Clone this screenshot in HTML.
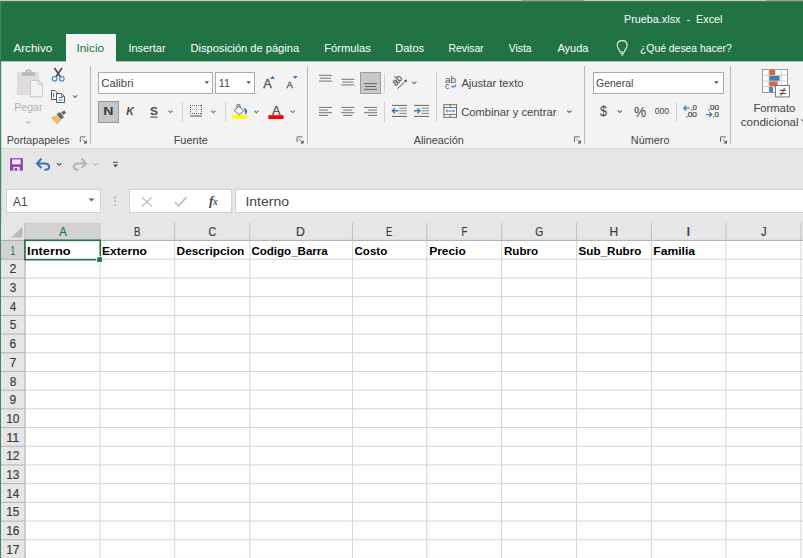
<!DOCTYPE html>
<html lang="es"><head><meta charset="utf-8"><title>Prueba.xlsx - Excel</title>
<style>
html,body{margin:0;padding:0;background:#fff;overflow:hidden}
svg{display:block;font-family:"Liberation Sans",sans-serif}
</style></head><body>
<svg width="803" height="558" viewBox="0 0 803 558">
<rect x="0" y="0" width="803" height="558" fill="#ffffff" />
<rect x="0" y="0" width="803" height="61.6" fill="#217346" />
<rect x="0" y="0" width="803" height="1.15" fill="#c9c6c9" />
<rect x="522" y="0" width="62" height="1.15" fill="#9c999d" />
<rect x="766" y="0" width="37" height="1.15" fill="#9c999d" />
<rect x="1" y="61.6" width="802" height="86.4" fill="#f3f3f3" />
<rect x="1" y="148" width="802" height="1" fill="#dadada" />
<rect x="1" y="149" width="802" height="91" fill="#e6e6e6" />
<rect x="66" y="34" width="50" height="28" fill="#f3f3f3" />
<rect x="0" y="1" width="1.2" height="557" fill="#3f8661" />
<text x="624.01" y="22.9" font-size="11.5" fill="#ffffff" textLength="98.51" lengthAdjust="spacingAndGlyphs" xml:space="preserve">Prueba.xlsx  -  Excel</text>
<text x="13.48" y="51.6" font-size="11.5" fill="#fff" textLength="38.71" lengthAdjust="spacingAndGlyphs" >Archivo</text>
<text x="76.51" y="51.6" font-size="11.5" fill="#217346" textLength="27.59" lengthAdjust="spacingAndGlyphs" >Inicio</text>
<text x="128.39" y="51.6" font-size="11.5" fill="#fff" textLength="37.19" lengthAdjust="spacingAndGlyphs" >Insertar</text>
<text x="190.49" y="51.6" font-size="11.5" fill="#fff" textLength="108.61" lengthAdjust="spacingAndGlyphs" >Disposición de página</text>
<text x="324.18" y="51.6" font-size="11.5" fill="#fff" textLength="46.62" lengthAdjust="spacingAndGlyphs" >Fórmulas</text>
<text x="395.19" y="51.6" font-size="11.5" fill="#fff" textLength="28.91" lengthAdjust="spacingAndGlyphs" >Datos</text>
<text x="448.55" y="51.6" font-size="11.5" fill="#fff" textLength="35.02" lengthAdjust="spacingAndGlyphs" >Revisar</text>
<text x="508.86" y="51.6" font-size="11.5" fill="#fff" textLength="22.64" lengthAdjust="spacingAndGlyphs" >Vista</text>
<text x="557.38" y="51.6" font-size="11.5" fill="#fff" textLength="31.12" lengthAdjust="spacingAndGlyphs" >Ayuda</text>
<text x="640.04" y="51.6" font-size="11.5" fill="#fff" textLength="91.65" lengthAdjust="spacingAndGlyphs" >¿Qué desea hacer?</text>
<rect x="90" y="66" width="1" height="78" fill="#b6b6b6" />
<rect x="307" y="66" width="1" height="78" fill="#b6b6b6" />
<rect x="584" y="66" width="1" height="78" fill="#b6b6b6" />
<rect x="730" y="66" width="1" height="78" fill="#b6b6b6" />
<rect x="182" y="102" width="1" height="20" fill="#d2d2d2" />
<rect x="225" y="102" width="1" height="20" fill="#d2d2d2" />
<rect x="384" y="73" width="1" height="20" fill="#d2d2d2" />
<rect x="384" y="102" width="1" height="20" fill="#d2d2d2" />
<rect x="436" y="72" width="1" height="50" fill="#d2d2d2" />
<rect x="676" y="102" width="1" height="20" fill="#d2d2d2" />
<text x="6.72" y="143.8" font-size="10" fill="#444444" textLength="62.96" lengthAdjust="spacingAndGlyphs" >Portapapeles</text>
<text x="173.7" y="143.8" font-size="10" fill="#444444" textLength="34.08" lengthAdjust="spacingAndGlyphs" >Fuente</text>
<text x="413.68" y="143.8" font-size="10" fill="#444444" textLength="50.03" lengthAdjust="spacingAndGlyphs" >Alineación</text>
<text x="630.81" y="143.8" font-size="10" fill="#444444" textLength="38.65" lengthAdjust="spacingAndGlyphs" >Número</text>
<rect x="98" y="72" width="115" height="22" fill="#ababab" />
<rect x="99" y="73" width="113" height="20" fill="#ffffff" />
<rect x="215" y="72" width="40" height="22" fill="#ababab" />
<rect x="216" y="73" width="38" height="20" fill="#ffffff" />
<rect x="593" y="72" width="131" height="22" fill="#ababab" />
<rect x="594" y="73" width="129" height="20" fill="#ffffff" />
<text x="101.22" y="86.9" font-size="11.4" fill="#444444" textLength="32.24" lengthAdjust="spacingAndGlyphs" >Calibri</text>
<text x="218.85" y="86.9" font-size="11.4" fill="#444444" textLength="10.93" lengthAdjust="spacingAndGlyphs" >11</text>
<text x="595.97" y="86.9" font-size="11.4" fill="#444444" textLength="37.33" lengthAdjust="spacingAndGlyphs" >General</text>
<path d="M204.5 81.3 L209.10000000000002 81.3 L206.8 84.1 Z" fill="#555"/>
<path d="M246.29999999999998 81.3 L250.9 81.3 L248.6 84.1 Z" fill="#555"/>
<path d="M714.1 81.3 L718.6999999999999 81.3 L716.4 84.1 Z" fill="#555"/>
<rect x="98" y="101" width="21" height="22" fill="#9a9a9a" />
<rect x="99" y="102" width="19" height="20" fill="#c6c6c6" />
<text x="103.26" y="115.1" font-size="10.8" fill="#3c3c3c" font-weight="bold" textLength="10.2" lengthAdjust="spacingAndGlyphs" >N</text>
<text x="126.21" y="115.1" font-size="10.8" fill="#4a4a4a" font-weight="bold" font-style="italic" textLength="7.65" lengthAdjust="spacingAndGlyphs" >K</text>
<text x="149.96" y="115.1" font-size="10.8" fill="#4a4a4a" font-weight="bold" textLength="7.9" lengthAdjust="spacingAndGlyphs" >S</text>
<rect x="150" y="116.6" width="7.6" height="1" fill="#444" />
<path d="M168.4 110.6 L170.5 112.6 L172.6 110.6" fill="none" stroke="#707070" stroke-width="1.1"/>
<path d="M211.3 110.7 L213.4 112.7 L215.5 110.7" fill="none" stroke="#707070" stroke-width="1.1"/>
<path d="M254.29999999999998 110.7 L256.4 112.7 L258.5 110.7" fill="none" stroke="#707070" stroke-width="1.1"/>
<path d="M290.59999999999997 110.6 L292.7 112.6 L294.8 110.6" fill="none" stroke="#707070" stroke-width="1.1"/>
<path d="M412.2 81.7 L414.3 83.7 L416.40000000000003 81.7" fill="none" stroke="#707070" stroke-width="1.1"/>
<path d="M567.1999999999999 110.5 L569.3 112.5 L571.4 110.5" fill="none" stroke="#707070" stroke-width="1.1"/>
<path d="M617.6999999999999 110.5 L619.8 112.5 L621.9 110.5" fill="none" stroke="#707070" stroke-width="1.1"/>
<path d="M73.0 95.4 L75.1 97.4 L77.19999999999999 95.4" fill="none" stroke="#707070" stroke-width="1.1"/>
<path d="M26.2 121.3 L28.3 123.3 L30.400000000000002 121.3" fill="none" stroke="#b4b4b4" stroke-width="1.1"/>
<rect x="360" y="72" width="21" height="22" fill="#9c9c9c" />
<rect x="361" y="73" width="19" height="20" fill="#c8c8c8" />
<text x="461.38" y="87.1" font-size="11.4" fill="#444444" textLength="62.09" lengthAdjust="spacingAndGlyphs" >Ajustar texto</text>
<text x="461.13" y="115.7" font-size="11.4" fill="#444444" textLength="95.25" lengthAdjust="spacingAndGlyphs" >Combinar y centrar</text>
<text x="14.23" y="111.3" font-size="11.4" fill="#b1b1b1" textLength="28.24" lengthAdjust="spacingAndGlyphs" >Pegar</text>
<text x="753.38" y="112.1" font-size="11.4" fill="#444444" textLength="41.9" lengthAdjust="spacingAndGlyphs" >Formato</text>
<text x="740.81" y="125.8" font-size="11.4" fill="#444444" textLength="57.76" lengthAdjust="spacingAndGlyphs" >condicional</text>
<path d="M801.1999999999999 119.3 L803.3 121.3 L805.4 119.3" fill="none" stroke="#707070" stroke-width="1.1"/>
<text x="600.06" y="116.4" font-size="15.2" fill="#444444" textLength="7.04" lengthAdjust="spacingAndGlyphs" >$</text>
<text x="634.01" y="116.6" font-size="13.8" fill="#444444" textLength="12.18" lengthAdjust="spacingAndGlyphs" >%</text>
<text x="654.76" y="114.1" font-size="8.6" fill="#444444" textLength="14.37" lengthAdjust="spacingAndGlyphs" >000</text>
<rect x="6" y="189" width="95" height="24" fill="#d2d2d2" />
<rect x="7" y="190" width="93" height="22" fill="#ffffff" />
<rect x="129" y="189" width="103" height="24" fill="#d2d2d2" />
<rect x="130" y="190" width="101" height="22" fill="#ffffff" />
<rect x="235" y="189" width="568" height="24" fill="#d2d2d2" />
<rect x="236" y="190" width="567" height="22" fill="#ffffff" />
<text x="13.08" y="206.2" font-size="12.2" fill="#444444" textLength="14.4" lengthAdjust="spacingAndGlyphs" >A1</text>
<path d="M88.5 198.4 L94.5 198.4 L91.5 201.4 Z" fill="#666"/>
<rect x="114.5" y="196.8" width="1.3" height="1.3" fill="#8e8e8e" />
<rect x="114.5" y="200.7" width="1.3" height="1.3" fill="#8e8e8e" />
<rect x="114.5" y="204.6" width="1.3" height="1.3" fill="#8e8e8e" />
<text x="245.41" y="206.2" font-size="12.2" fill="#444444" textLength="43.58" lengthAdjust="spacingAndGlyphs" >Interno</text>
<path d="M142 197.4 L151.8 206.2 M151.8 197.4 L142 206.2" stroke="#b8b8b8" stroke-width="1.2" fill="none"/>
<path d="M175 202.2 L178.6 205.8 L186.6 197.2" stroke="#c0c0c0" stroke-width="1.8" fill="none"/>
<text x="209" y="205.2" fill="#4a4a4a" font-style="italic" font-weight="bold" font-family="Liberation Serif, serif"><tspan font-size="13.5">f</tspan><tspan font-size="9.5" dx="-0.6">x</tspan></text>
<rect x="1" y="222.8" width="802" height="17.2" fill="#e6e6e6" />
<rect x="1" y="240" width="23.2" height="318" fill="#e6e6e6" />
<rect x="24.6" y="222.8" width="75" height="17.2" fill="#d2d2d2" />
<rect x="1" y="240.8" width="23.2" height="18.2" fill="#d2d2d2" />
<rect x="99.6" y="222.8" width="1" height="17.2" fill="#c0c0c0" />
<rect x="174.1" y="222.8" width="1" height="17.2" fill="#c0c0c0" />
<rect x="249.3" y="222.8" width="1" height="17.2" fill="#c0c0c0" />
<rect x="351.9" y="222.8" width="1" height="17.2" fill="#c0c0c0" />
<rect x="426.3" y="222.8" width="1" height="17.2" fill="#c0c0c0" />
<rect x="501.2" y="222.8" width="1" height="17.2" fill="#c0c0c0" />
<rect x="576.1" y="222.8" width="1" height="17.2" fill="#c0c0c0" />
<rect x="650.9" y="222.8" width="1" height="17.2" fill="#c0c0c0" />
<rect x="725.4" y="222.8" width="1" height="17.2" fill="#c0c0c0" />
<rect x="800.5" y="222.8" width="1" height="17.2" fill="#c0c0c0" />
<rect x="24.1" y="222.8" width="1.2" height="17.2" fill="#c4c4c4" />
<rect x="1" y="239.9" width="802" height="1" fill="#ababab" />
<rect x="24.1" y="240" width="1.7" height="318" fill="#c2c2c2" />
<rect x="99.6" y="240.9" width="1" height="317.1" fill="#d4d4d4" />
<rect x="174.1" y="240.9" width="1" height="317.1" fill="#d4d4d4" />
<rect x="249.3" y="240.9" width="1" height="317.1" fill="#d4d4d4" />
<rect x="351.9" y="240.9" width="1" height="317.1" fill="#d4d4d4" />
<rect x="426.3" y="240.9" width="1" height="317.1" fill="#d4d4d4" />
<rect x="501.2" y="240.9" width="1" height="317.1" fill="#d4d4d4" />
<rect x="576.1" y="240.9" width="1" height="317.1" fill="#d4d4d4" />
<rect x="650.9" y="240.9" width="1" height="317.1" fill="#d4d4d4" />
<rect x="725.4" y="240.9" width="1" height="317.1" fill="#d4d4d4" />
<rect x="800.5" y="240.9" width="1" height="317.1" fill="#d4d4d4" />
<rect x="25.8" y="258.75" width="777.2" height="1" fill="#d4d4d4" />
<rect x="1" y="258.75" width="24" height="1" fill="#b4b4b4" />
<rect x="25.8" y="277.45" width="777.2" height="1" fill="#d4d4d4" />
<rect x="1" y="277.45" width="24" height="1" fill="#b4b4b4" />
<rect x="25.8" y="296.15" width="777.2" height="1" fill="#d4d4d4" />
<rect x="1" y="296.15" width="24" height="1" fill="#b4b4b4" />
<rect x="25.8" y="314.85" width="777.2" height="1" fill="#d4d4d4" />
<rect x="1" y="314.85" width="24" height="1" fill="#b4b4b4" />
<rect x="25.8" y="333.55" width="777.2" height="1" fill="#d4d4d4" />
<rect x="1" y="333.55" width="24" height="1" fill="#b4b4b4" />
<rect x="25.8" y="352.25" width="777.2" height="1" fill="#d4d4d4" />
<rect x="1" y="352.25" width="24" height="1" fill="#b4b4b4" />
<rect x="25.8" y="370.95" width="777.2" height="1" fill="#d4d4d4" />
<rect x="1" y="370.95" width="24" height="1" fill="#b4b4b4" />
<rect x="25.8" y="389.65" width="777.2" height="1" fill="#d4d4d4" />
<rect x="1" y="389.65" width="24" height="1" fill="#b4b4b4" />
<rect x="25.8" y="408.35" width="777.2" height="1" fill="#d4d4d4" />
<rect x="1" y="408.35" width="24" height="1" fill="#b4b4b4" />
<rect x="25.8" y="427.05" width="777.2" height="1" fill="#d4d4d4" />
<rect x="1" y="427.05" width="24" height="1" fill="#b4b4b4" />
<rect x="25.8" y="445.75" width="777.2" height="1" fill="#d4d4d4" />
<rect x="1" y="445.75" width="24" height="1" fill="#b4b4b4" />
<rect x="25.8" y="464.45" width="777.2" height="1" fill="#d4d4d4" />
<rect x="1" y="464.45" width="24" height="1" fill="#b4b4b4" />
<rect x="25.8" y="483.15" width="777.2" height="1" fill="#d4d4d4" />
<rect x="1" y="483.15" width="24" height="1" fill="#b4b4b4" />
<rect x="25.8" y="501.85" width="777.2" height="1" fill="#d4d4d4" />
<rect x="1" y="501.85" width="24" height="1" fill="#b4b4b4" />
<rect x="25.8" y="520.55" width="777.2" height="1" fill="#d4d4d4" />
<rect x="1" y="520.55" width="24" height="1" fill="#b4b4b4" />
<rect x="25.8" y="539.25" width="777.2" height="1" fill="#d4d4d4" />
<rect x="1" y="539.25" width="24" height="1" fill="#b4b4b4" />
<rect x="25.8" y="557.95" width="777.2" height="1" fill="#d4d4d4" />
<rect x="1" y="557.95" width="24" height="1" fill="#b4b4b4" />
<path d="M22.3 226.8 L22.3 237.5 L11.3 237.5 Z" fill="#b9b9b9"/>
<text x="59.33" y="235.6" font-size="12.1" fill="#217346" textLength="7.59" lengthAdjust="spacingAndGlyphs" stroke="#217346" stroke-width="0.2">A</text>
<text x="133.96" y="235.6" font-size="12.1" fill="#3d3d3d" textLength="6.45" lengthAdjust="spacingAndGlyphs" stroke="#3d3d3d" stroke-width="0.2">B</text>
<text x="208.61" y="235.6" font-size="12.1" fill="#3d3d3d" textLength="7.7" lengthAdjust="spacingAndGlyphs" stroke="#3d3d3d" stroke-width="0.2">C</text>
<text x="296.05" y="235.6" font-size="12.1" fill="#3d3d3d" textLength="8.84" lengthAdjust="spacingAndGlyphs" stroke="#3d3d3d" stroke-width="0.2">D</text>
<text x="385.97" y="235.6" font-size="12.1" fill="#3d3d3d" textLength="6.34" lengthAdjust="spacingAndGlyphs" stroke="#3d3d3d" stroke-width="0.2">E</text>
<text x="461.47" y="235.6" font-size="12.1" fill="#3d3d3d" textLength="5.81" lengthAdjust="spacingAndGlyphs" stroke="#3d3d3d" stroke-width="0.2">F</text>
<text x="535.13" y="235.6" font-size="12.1" fill="#3d3d3d" textLength="8.04" lengthAdjust="spacingAndGlyphs" stroke="#3d3d3d" stroke-width="0.2">G</text>
<text x="609.47" y="235.6" font-size="12.1" fill="#3d3d3d" textLength="8.6" lengthAdjust="spacingAndGlyphs" stroke="#3d3d3d" stroke-width="0.2">H</text>
<text x="686.31" y="235.6" font-size="12.1" fill="#3d3d3d" textLength="4.17" lengthAdjust="spacingAndGlyphs" stroke="#3d3d3d" stroke-width="0.2">I</text>
<text x="760.98" y="235.6" font-size="12.1" fill="#3d3d3d" textLength="5.55" lengthAdjust="spacingAndGlyphs" stroke="#3d3d3d" stroke-width="0.2">J</text>
<text x="10.83" y="254.65" font-size="11.9" fill="#217346" textLength="4.13" lengthAdjust="spacingAndGlyphs" stroke="#217346" stroke-width="0.2">1</text>
<text x="9.58" y="273.34999999999997" font-size="11.9" fill="#3d3d3d" textLength="6.84" lengthAdjust="spacingAndGlyphs" stroke="#3d3d3d" stroke-width="0.2">2</text>
<text x="9.75" y="292.04999999999995" font-size="11.9" fill="#3d3d3d" textLength="6.57" lengthAdjust="spacingAndGlyphs" stroke="#3d3d3d" stroke-width="0.2">3</text>
<text x="9.94" y="310.75" font-size="11.9" fill="#3d3d3d" textLength="6.18" lengthAdjust="spacingAndGlyphs" stroke="#3d3d3d" stroke-width="0.2">4</text>
<text x="9.73" y="329.45" font-size="11.9" fill="#3d3d3d" textLength="6.57" lengthAdjust="spacingAndGlyphs" stroke="#3d3d3d" stroke-width="0.2">5</text>
<text x="9.58" y="348.15" font-size="11.9" fill="#3d3d3d" textLength="6.75" lengthAdjust="spacingAndGlyphs" stroke="#3d3d3d" stroke-width="0.2">6</text>
<text x="9.57" y="366.84999999999997" font-size="11.9" fill="#3d3d3d" textLength="6.85" lengthAdjust="spacingAndGlyphs" stroke="#3d3d3d" stroke-width="0.2">7</text>
<text x="9.68" y="385.54999999999995" font-size="11.9" fill="#3d3d3d" textLength="6.64" lengthAdjust="spacingAndGlyphs" stroke="#3d3d3d" stroke-width="0.2">8</text>
<text x="9.63" y="404.25" font-size="11.9" fill="#3d3d3d" textLength="6.74" lengthAdjust="spacingAndGlyphs" stroke="#3d3d3d" stroke-width="0.2">9</text>
<text x="6.2" y="422.95" font-size="11.9" fill="#3d3d3d" textLength="13.16" lengthAdjust="spacingAndGlyphs" stroke="#3d3d3d" stroke-width="0.2">10</text>
<text x="6.19" y="441.65" font-size="11.9" fill="#3d3d3d" textLength="13.29" lengthAdjust="spacingAndGlyphs" stroke="#3d3d3d" stroke-width="0.2">11</text>
<text x="6.19" y="460.34999999999997" font-size="11.9" fill="#3d3d3d" textLength="13.31" lengthAdjust="spacingAndGlyphs" stroke="#3d3d3d" stroke-width="0.2">12</text>
<text x="6.19" y="479.04999999999995" font-size="11.9" fill="#3d3d3d" textLength="13.23" lengthAdjust="spacingAndGlyphs" stroke="#3d3d3d" stroke-width="0.2">13</text>
<text x="6.21" y="497.75" font-size="11.9" fill="#3d3d3d" textLength="13.04" lengthAdjust="spacingAndGlyphs" stroke="#3d3d3d" stroke-width="0.2">14</text>
<text x="6.2" y="516.4499999999999" font-size="11.9" fill="#3d3d3d" textLength="13.2" lengthAdjust="spacingAndGlyphs" stroke="#3d3d3d" stroke-width="0.2">15</text>
<text x="6.19" y="535.15" font-size="11.9" fill="#3d3d3d" textLength="13.23" lengthAdjust="spacingAndGlyphs" stroke="#3d3d3d" stroke-width="0.2">16</text>
<text x="6.19" y="553.85" font-size="11.9" fill="#3d3d3d" textLength="13.31" lengthAdjust="spacingAndGlyphs" stroke="#3d3d3d" stroke-width="0.2">17</text>
<text x="27.14" y="255" font-size="11.7" fill="#000" font-weight="bold" textLength="43.56" lengthAdjust="spacingAndGlyphs" >Interno</text>
<text x="102.09" y="255" font-size="11.7" fill="#000" font-weight="bold" textLength="44.88" lengthAdjust="spacingAndGlyphs" >Externo</text>
<text x="176.61" y="255" font-size="11.7" fill="#000" font-weight="bold" textLength="67.73" lengthAdjust="spacingAndGlyphs" >Descripcion</text>
<text x="251.43" y="255" font-size="11.7" fill="#000" font-weight="bold" textLength="76.3" lengthAdjust="spacingAndGlyphs" >Codigo_Barra</text>
<text x="354.53" y="255" font-size="11.7" fill="#000" font-weight="bold" textLength="32.73" lengthAdjust="spacingAndGlyphs" >Costo</text>
<text x="429.2" y="255" font-size="11.7" fill="#000" font-weight="bold" textLength="36.57" lengthAdjust="spacingAndGlyphs" >Precio</text>
<text x="503.92" y="255" font-size="11.7" fill="#000" font-weight="bold" textLength="34.23" lengthAdjust="spacingAndGlyphs" >Rubro</text>
<text x="578.56" y="255" font-size="11.7" fill="#000" font-weight="bold" textLength="62.79" lengthAdjust="spacingAndGlyphs" >Sub_Rubro</text>
<text x="653.29" y="255" font-size="11.7" fill="#000" font-weight="bold" textLength="41.84" lengthAdjust="spacingAndGlyphs" >Familia</text>
<rect x="24.9" y="240.3" width="75.4" height="19.4" fill="none" stroke="#217346" stroke-width="1.6"/>
<rect x="96.4" y="256.4" width="6.2" height="6.2" fill="#ffffff" />
<rect x="97.2" y="257.2" width="4.7" height="4.7" fill="#217346" />
<rect x="17" y="72" width="22" height="23" rx="1" fill="#dfdbdf"/>
<path d="M22.1 75.8 L22.1 72.2 L25.6 72.2 L25.6 71 Q25.6 69.3 28.5 69.3 Q31.4 69.3 31.4 71 L31.4 72.2 L34.9 72.2 L34.9 75.8 Z" fill="#b9b5b9"/>
<circle cx="28.5" cy="71.6" r="0.9" fill="#f3f3f3"/>
<path d="M30.5 80.5 L38.8 80.5 L42.6 84.3 L42.6 96.8 L30.5 96.8 Z" fill="#f5f2f5" stroke="#c9c5c9" stroke-width="1"/>
<path d="M38.6 80.7 L38.6 84.5 L42.4 84.5" fill="none" stroke="#c9c5c9" stroke-width="1"/>
<path d="M54.4 68 L60.6 77 M62 68 L55.8 77" stroke="#4a4a4a" stroke-width="1.6" fill="none"/>
<circle cx="54.6" cy="78.8" r="2.3" fill="none" stroke="#4a88c7" stroke-width="1.15"/>
<circle cx="61.8" cy="78.8" r="2.3" fill="none" stroke="#4a88c7" stroke-width="1.15"/>
<path d="M51.5 90.5 L55 90.5 L57 92.5 L57 99.5 L51.5 99.5 Z" fill="#fff" stroke="#5a5a5a" stroke-width="1"/>
<path d="M56.5 93.5 L61.5 93.5 L64.5 96.5 L64.5 102.5 L56.5 102.5 Z" fill="#fff" stroke="#5a5a5a" stroke-width="1"/>
<path d="M61.5 93.5 L61.5 96.5 L64.5 96.5" fill="none" stroke="#5a5a5a" stroke-width="0.8"/>
<path d="M53.5 93 L53.5 97.5 M58.5 97.5 L62.8 97.5 M58.5 100 L62.8 100" stroke="#3f7fc1" stroke-width="1" fill="none"/>
<path d="M50.7 117.4 L56.6 115 L61.2 120.4 L57.2 124.4 Z" fill="#ebbd70"/>
<path d="M56.6 114.2 L60.2 111.9 L64 117.2 L60.9 119.5 Z" fill="#6a6a6a"/>
<path d="M61.4 112.2 L64.3 110.6 L66 112.9 L63.3 114.8 Z" fill="#5a5a5a"/>
<rect x="190" y="105" width="1" height="1" fill="#6a6a6a"/>
<rect x="190" y="113" width="1" height="1" fill="#555"/>
<rect x="192" y="105" width="1" height="1" fill="#6a6a6a"/>
<rect x="192" y="113" width="1" height="1" fill="#555"/>
<rect x="194" y="105" width="1" height="1" fill="#6a6a6a"/>
<rect x="194" y="113" width="1" height="1" fill="#555"/>
<rect x="196" y="105" width="1" height="1" fill="#6a6a6a"/>
<rect x="196" y="113" width="1" height="1" fill="#555"/>
<rect x="198" y="105" width="1" height="1" fill="#6a6a6a"/>
<rect x="198" y="113" width="1" height="1" fill="#555"/>
<rect x="200" y="105" width="1" height="1" fill="#6a6a6a"/>
<rect x="200" y="113" width="1" height="1" fill="#555"/>
<rect x="201" y="105" width="1" height="1" fill="#555"/><rect x="201" y="113" width="1" height="1" fill="#555"/>
<rect x="190" y="105" width="1" height="1" fill="#555"/>
<rect x="201" y="105" width="1" height="1" fill="#555"/>
<rect x="190" y="107" width="1" height="1" fill="#555"/>
<rect x="201" y="107" width="1" height="1" fill="#555"/>
<rect x="190" y="109" width="1" height="1" fill="#555"/>
<rect x="201" y="109" width="1" height="1" fill="#555"/>
<rect x="190" y="111" width="1" height="1" fill="#555"/>
<rect x="201" y="111" width="1" height="1" fill="#555"/>
<rect x="190" y="113" width="1" height="1" fill="#555"/>
<rect x="201" y="113" width="1" height="1" fill="#555"/>
<rect x="192" y="109" width="1" height="1" fill="#b0b0b0"/>
<rect x="194" y="109" width="1" height="1" fill="#b0b0b0"/>
<rect x="196" y="109" width="1" height="1" fill="#b0b0b0"/>
<rect x="198" y="109" width="1" height="1" fill="#b0b0b0"/>
<rect x="200" y="109" width="1" height="1" fill="#b0b0b0"/>
<rect x="196" y="107" width="1" height="1" fill="#b0b0b0"/>
<rect x="196" y="109" width="1" height="1" fill="#b0b0b0"/>
<rect x="196" y="111" width="1" height="1" fill="#b0b0b0"/>
<rect x="190" y="115.5" width="12" height="1" fill="#555"/>
<path d="M239 105.9 L243.8 110.6 L239.2 114.9 L234.5 110.3 Z" fill="#fff" stroke="#666" stroke-width="1"/>
<path d="M237 108.6 L237 104.7 L240 104.7 L240 108.4" fill="none" stroke="#666" stroke-width="0.9"/>
<path d="M244.2 107.6 Q247.6 109.6 247.2 112 Q246.8 114 245.2 114.8 Q245.6 112.6 244.6 111.6 Z" fill="#3f7fc1"/>
<rect x="232" y="115.1" width="15" height="3.8" fill="#ffff00"/>
<text x="276.2" y="115.1" font-size="12.8" fill="#555" stroke="#555" stroke-width="0.3" text-anchor="middle">A</text>
<rect x="268.3" y="115.2" width="15.2" height="3.8" fill="#ff0000"/>
<text x="267.4" y="87.9" font-size="12.8" fill="#555" stroke="#555" stroke-width="0.3" text-anchor="middle">A</text>
<path d="M270 78.9 L275 78.9 L272.5 75.8 Z" fill="#3f7fc1"/>
<text x="289.8" y="87.9" font-size="9.6" fill="#555" stroke="#555" stroke-width="0.3" text-anchor="middle">A</text>
<path d="M292.7 76 L297.7 76 L295.2 79 Z" fill="#3f7fc1"/>
<rect x="319" y="74.8" width="13" height="1" fill="#777"/>
<rect x="320" y="77.7" width="11" height="1" fill="#777"/>
<rect x="319" y="80.6" width="13" height="1" fill="#777"/>
<rect x="341.2" y="78.8" width="13.100000000000023" height="1" fill="#777"/>
<rect x="342.2" y="81.6" width="11.100000000000023" height="1" fill="#777"/>
<rect x="341.2" y="84.4" width="13.100000000000023" height="1" fill="#777"/>
<rect x="364" y="83.1" width="13" height="1" fill="#666"/>
<rect x="365" y="86.0" width="11" height="1" fill="#666"/>
<rect x="364" y="88.9" width="13" height="1" fill="#666"/>
<rect x="319" y="106.9" width="13" height="1" fill="#777"/>
<rect x="319" y="109.6" width="9" height="1" fill="#777"/>
<rect x="319" y="112.2" width="13" height="1" fill="#777"/>
<rect x="319" y="114.9" width="9" height="1" fill="#777"/>
<rect x="341.2" y="106.9" width="13.100000000000023" height="1" fill="#777"/>
<rect x="343.2" y="109.6" width="9.100000000000023" height="1" fill="#777"/>
<rect x="341.2" y="112.2" width="13.100000000000023" height="1" fill="#777"/>
<rect x="343.2" y="114.9" width="9.100000000000023" height="1" fill="#777"/>
<rect x="364" y="106.9" width="13" height="1" fill="#777"/>
<rect x="368" y="109.6" width="9" height="1" fill="#777"/>
<rect x="364" y="112.2" width="13" height="1" fill="#777"/>
<rect x="368" y="114.9" width="9" height="1" fill="#777"/>
<text transform="translate(399.3,82.5) rotate(-45)" x="0" y="0" font-size="10.4" fill="#555" stroke="#555" stroke-width="0.25" text-anchor="middle" textLength="10.4" lengthAdjust="spacingAndGlyphs">ab</text>
<path d="M397.6 88.6 L406.2 80.4" stroke="#555" stroke-width="1" fill="none"/><path d="M404 80 L406.9 79.8 L406.7 82.7 Z" fill="#555"/>
<rect x="391.9" y="104.9" width="15.1" height="1" fill="#666"/>
<rect x="391.9" y="115.9" width="15.1" height="1" fill="#666"/>
<rect x="399.29999999999995" y="107.7" width="7.7" height="1" fill="#888"/>
<rect x="399.29999999999995" y="110.3" width="7.7" height="1" fill="#888"/>
<rect x="399.29999999999995" y="112.9" width="7.7" height="1" fill="#888"/>
<path d="M392.29999999999995 110.8 L398.29999999999995 110.8 M394.9 108.2 L392.29999999999995 110.8 L394.9 113.4" stroke="#3f7fc1" stroke-width="1.4" fill="none"/>
<rect x="414" y="104.9" width="15.1" height="1" fill="#666"/>
<rect x="414" y="115.9" width="15.1" height="1" fill="#666"/>
<rect x="421.4" y="107.7" width="7.7" height="1" fill="#888"/>
<rect x="421.4" y="110.3" width="7.7" height="1" fill="#888"/>
<rect x="421.4" y="112.9" width="7.7" height="1" fill="#888"/>
<path d="M414 110.8 L420 110.8 M417.4 108.2 L420 110.8 L417.4 113.4" stroke="#3f7fc1" stroke-width="1.4" fill="none"/>
<text x="445" y="82.6" font-size="9" fill="#555" textLength="11.2" lengthAdjust="spacingAndGlyphs">ab</text>
<text x="445" y="88.6" font-size="9" fill="#555">c</text>
<path d="M455.6 84.2 L455.6 86.6 L452 86.6 M453.4 85.2 L452 86.6 L453.4 88" stroke="#3f7fc1" stroke-width="1" fill="none"/>
<rect x="443.9" y="104.7" width="12.6" height="12.6" fill="#fff" stroke="#6a6a6a" stroke-width="1"/>
<path d="M443.9 107.6 L456.5 107.6 M443.9 114.4 L456.5 114.4 M450.2 104.7 L450.2 107.6 M450.2 114.4 L450.2 117.3" stroke="#6a6a6a" stroke-width="1" fill="none"/>
<path d="M446 111 L454.4 111 M447.4 109.6 L446 111 L447.4 112.4 M453 109.6 L454.4 111 L453 112.4" stroke="#3f7fc1" stroke-width="1" fill="none"/>
<path d="M683.8 108.2 L689.6 108.2 M686.2 105.8 L683.8 108.2 L686.2 110.6" stroke="#3f7fc1" stroke-width="1.3" fill="none"/>
<text x="697" y="110" font-size="7.6" fill="#333" stroke="#333" stroke-width="0.15" text-anchor="end" textLength="6.6" lengthAdjust="spacingAndGlyphs">,0</text>
<text x="697" y="117.1" font-size="7.6" fill="#333" stroke="#333" stroke-width="0.15" text-anchor="end" textLength="11.6" lengthAdjust="spacingAndGlyphs">,00</text>
<text x="719" y="110" font-size="7.6" fill="#333" stroke="#333" stroke-width="0.15" text-anchor="end" textLength="11.2" lengthAdjust="spacingAndGlyphs">,00</text>
<text x="719" y="117.1" font-size="7.6" fill="#333" stroke="#333" stroke-width="0.15" text-anchor="end" textLength="6.6" lengthAdjust="spacingAndGlyphs">,0</text>
<path d="M706 114.6 L711.8 114.6 M709.4 112.2 L711.8 114.6 L709.4 117" stroke="#3f7fc1" stroke-width="1.3" fill="none"/>
<rect x="762.5" y="69.5" width="25" height="23" fill="#fff" stroke="#9a9a9a" stroke-width="1"/>
<path d="M769 69.5 L769 92.5 M775.2 69.5 L775.2 92.5 M781.4 69.5 L781.4 92.5 M762.5 75.3 L787.5 75.3 M762.5 81 L787.5 81 M762.5 86.6 L787.5 86.6" stroke="#d0d0d0" stroke-width="1" fill="none"/>
<rect x="769.3" y="69.9" width="5.7" height="5.1" fill="#da6540"/>
<rect x="769.3" y="75.8" width="10.3" height="4.9" fill="#3f7dc2"/>
<rect x="769.3" y="81.4" width="8.3" height="4.9" fill="#da6540"/>
<rect x="769.3" y="87" width="3.6" height="5.1" fill="#3f7dc2"/>
<rect x="775.5" y="85.5" width="14" height="11.4" fill="#fff" stroke="#7a7a7a" stroke-width="1"/>
<text x="782.5" y="95.6" font-size="13" fill="#444" text-anchor="middle">≠</text>
<path d="M80.3 142.1 L80.3 136.9 L85.7 136.9 M82.6 139.3 L85.89999999999999 142.6" stroke="#6a6a6a" stroke-width="1" fill="none"/>
<path d="M86.8 140.1 L86.8 143.6 L83.3 143.6 Z" fill="#555"/>
<path d="M297.1 142.1 L297.1 136.9 L302.5 136.9 M299.40000000000003 139.3 L302.70000000000005 142.6" stroke="#6a6a6a" stroke-width="1" fill="none"/>
<path d="M303.6 140.1 L303.6 143.6 L300.1 143.6 Z" fill="#555"/>
<path d="M574.5 142.1 L574.5 136.9 L579.9 136.9 M576.8 139.3 L580.1 142.6" stroke="#6a6a6a" stroke-width="1" fill="none"/>
<path d="M581.0 140.1 L581.0 143.6 L577.5 143.6 Z" fill="#555"/>
<path d="M720.5 142.1 L720.5 136.9 L725.9 136.9 M722.8 139.3 L726.1 142.6" stroke="#6a6a6a" stroke-width="1" fill="none"/>
<path d="M727.0 140.1 L727.0 143.6 L723.5 143.6 Z" fill="#555"/>
<path d="M10 158.2 L22.9 158.2 L22.9 170.6 L10 170.6 Z" fill="#9145a9"/>
<rect x="12.2" y="159.4" width="8.5" height="4.9" fill="#f0e6f3"/>
<rect x="13.4" y="166.9" width="6.3" height="3.7" fill="#f0e6f3"/>
<rect x="14.6" y="168" width="2.6" height="2.6" fill="#9145a9"/>
<path d="M37.2 163.4 L44.6 163.4 Q49.2 163.6 49.2 166.8 Q49.2 169.8 44.4 169.8" stroke="#3374b9" stroke-width="2" fill="none"/>
<path d="M41.4 158.8 L37 163.4 L41.4 168" stroke="#3374b9" stroke-width="2" fill="none"/>
<path d="M57 163.2 L59.2 165.3 L61.4 163.2" stroke="#444" stroke-width="1.1" fill="none"/>
<path d="M85.8 163.4 L78.4 163.4 Q73.8 163.6 73.8 166.8 Q73.8 169.8 78.6 169.8" stroke="#b4b4b4" stroke-width="2" fill="none"/>
<path d="M81.6 158.8 L86 163.4 L81.6 168" stroke="#b4b4b4" stroke-width="2" fill="none"/>
<path d="M93.4 163.2 L95.6 165.3 L97.8 163.2" stroke="#b4b4b4" stroke-width="1.1" fill="none"/>
<rect x="113" y="161.8" width="5" height="1" fill="#444"/>
<path d="M113 164.4 L118 164.4 L115.5 167.2 Z" fill="#444"/>
<path d="M620.2 52 Q619.8 50.4 618.6 48.8 Q617.3 47.2 617.3 45.3 Q617.3 40.6 622.2 40.6 Q627.1 40.6 627.1 45.3 Q627.1 47.2 625.8 48.8 Q624.6 50.4 624.2 52 Z" fill="none" stroke="#e8f1eb" stroke-width="1.15"/>
<path d="M620.4 53.4 L624 53.4 M621 55 L623.4 55" stroke="#e4efe8" stroke-width="1" fill="none"/>
</svg>
</body></html>
